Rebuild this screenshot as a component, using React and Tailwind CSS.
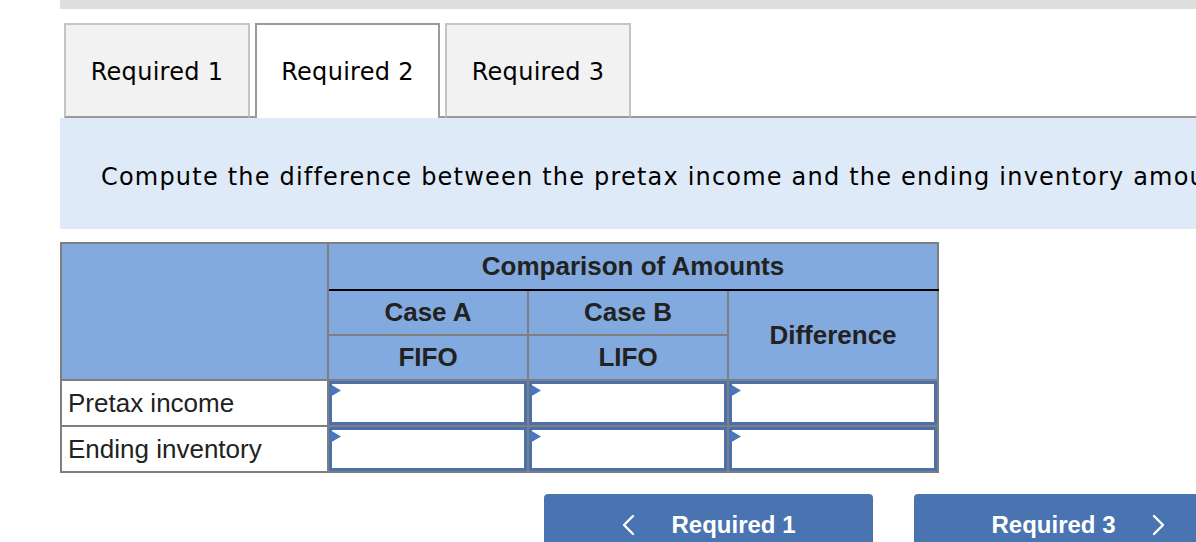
import React from "react";

const verdana = { fontFamily: '"DejaVu Sans", Verdana, sans-serif' };

const Tab = ({ label, active }) => (
  <div
    className={
      active
        ? "w-[185px] h-[95px] border-2 border-b-0 border-[#9a9a9a] bg-white flex items-center justify-center text-[24px] text-black"
        : "w-[186px] h-[95px] border-2 border-[#c4c4c4] border-b-[#9a9a9a] bg-[#f2f2f2] flex items-center justify-center text-[24px] text-black"
    }
  >
    <span className={active ? "tracking-[0.3px] pt-[1px]" : "tracking-[0.3px] pt-[3px]"}>{label}</span>
  </div>
);

const Gap = ({ w }) => <div className={`${w} h-[95px] border-b-2 border-[#9a9a9a]`} />;

const InputCell = () => (
  <td className="p-0 border-2 border-[#7f7f7f] bg-white">
    <div className="relative h-[44px] border-[3px] border-[#4a70ad] bg-white">
      <div className="absolute left-[-2px] top-[0px] w-[11px] h-[13px] bg-[#4a76bd] [clip-path:polygon(0_0,100%_50%,0_100%)]" />
    </div>
  </td>
);

const Chevron = ({ dir }) => (
  <svg width="16" height="22" viewBox="0 0 16 22" fill="none" stroke="white" strokeWidth="2.4" strokeLinecap="round" strokeLinejoin="round">
    {dir === "left" ? <path d="M12 2 L3 11 L12 20" /> : <path d="M4 2 L13 11 L4 20" />}
  </svg>
);

const head = "border-2 border-[#7f7f7f] text-center font-bold text-[26px] text-[#222]";

export default function App() {
  return (
    <div className="w-[1196px] h-[542px] overflow-hidden bg-white">
      <div className="ml-[60px] h-[9px] bg-[#dedede]" />

      <div className="flex mt-[14px] ml-[64px]" style={verdana}>
        <Tab label="Required 1" />
        <Gap w="w-[5px]" />
        <Tab label="Required 2" active />
        <Gap w="w-[5px]" />
        <Tab label="Required 3" />
        <Gap w="flex-1" />
      </div>

      <div className="ml-[60px] h-[111px] bg-[#deeaf7] flex items-center pl-[41px] pt-[6px] overflow-hidden" style={verdana}>
        <p className="text-[24px] text-black whitespace-nowrap tracking-[1.2px]">
          Compute the difference between the pretax income and the ending inventory amounts for Case A and Case B.
        </p>
      </div>

      <div className="ml-[60px] mt-[13px]" style={{ fontFamily: '"Liberation Sans", Arial, sans-serif' }}>
        <table className="table-fixed border-collapse border-2 border-[#7f7f7f] w-[877px]">
          <colgroup>
            <col className="w-[267px]" />
            <col className="w-[200px]" />
            <col className="w-[200px]" />
            <col className="w-[210px]" />
          </colgroup>
          <tbody>
            <tr className="h-[47px] bg-[#83aadf]">
              <td rowSpan={3} className="border-2 border-[#7f7f7f]" />
              <td colSpan={3} className={`${head} border-b-black`}>
                Comparison of Amounts
              </td>
            </tr>
            <tr className="h-[45px] bg-[#83aadf]">
              <td className={`${head} border-t-black`}>Case A</td>
              <td className={`${head} border-t-black`}>Case B</td>
              <td rowSpan={2} className={`${head} border-t-black`}>
                Difference
              </td>
            </tr>
            <tr className="h-[45px] bg-[#83aadf]">
              <td className={head}>FIFO</td>
              <td className={head}>LIFO</td>
            </tr>
            <tr>
              <td className="border-2 border-[#7f7f7f] px-[6px] text-[26px] text-[#222]">Pretax income</td>
              <InputCell />
              <InputCell />
              <InputCell />
            </tr>
            <tr>
              <td className="border-2 border-[#7f7f7f] px-[6px] text-[26px] text-[#222]">Ending inventory</td>
              <InputCell />
              <InputCell />
              <InputCell />
            </tr>
          </tbody>
        </table>
      </div>

      <div className="flex gap-[41px] pl-[544px] mt-[21px]" style={{ fontFamily: '"Liberation Sans", Arial, sans-serif' }}>
        <button className="w-[329px] h-[62px] shrink-0 rounded-t-[4px] bg-[#4a73b1] flex items-center justify-center gap-[34px] text-white font-bold text-[24px]">
          <Chevron dir="left" />
          <span>Required 1</span>
        </button>
        <button className="w-[329px] h-[62px] shrink-0 rounded-t-[4px] bg-[#4a73b1] flex items-center justify-center gap-[34px] text-white font-bold text-[24px]">
          <span>Required 3</span>
          <Chevron dir="right" />
        </button>
      </div>
    </div>
  );
}
